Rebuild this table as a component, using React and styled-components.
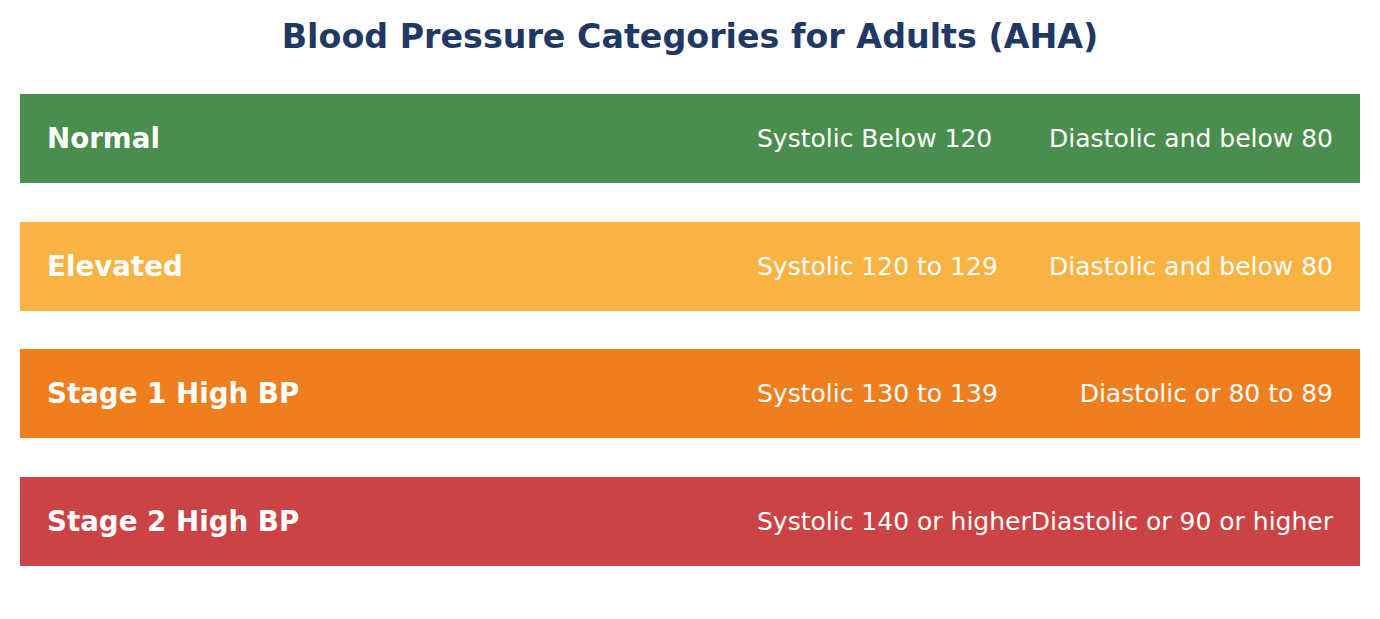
import React from 'react'
import styled, { createGlobalStyle } from 'styled-components'

const GlobalStyle = createGlobalStyle`
  html, body {
    margin: 0;
    padding: 0;
    background: #ffffff;
    font-family: "DejaVu Sans", "Liberation Sans", sans-serif;
  }
`

const Page = styled.div`
  padding: 0 20px;
`

const Title = styled.h1`
  margin: 0;
  padding-top: 17px;
  height: 94px;
  box-sizing: border-box;
  text-align: center;
  font-size: 33.3px;
  font-weight: bold;
  color: #1f3864;
`

const List = styled.div`
  display: flex;
  flex-direction: column;
  gap: 38.7px;
`

const Row = styled.div`
  display: flex;
  align-items: center;
  height: 89px;
  padding: 0 27px;
  background: ${p => p.color};
  color: #ffffff;
`

const Label = styled.div`
  flex: 1;
  font-size: 27.7px;
  font-weight: bold;
`

const Values = styled.div`
  display: flex;
  justify-content: space-between;
  width: 576px;
  font-size: 25px;
  white-space: nowrap;
`

const categories = [
  { name: 'Normal', color: '#4a8e4d', sys: 'Systolic Below 120', dia: 'Diastolic and below 80' },
  { name: 'Elevated', color: '#f9b342', sys: 'Systolic 120 to 129', dia: 'Diastolic and below 80' },
  { name: 'Stage 1 High BP', color: '#ef7e1f', sys: 'Systolic 130 to 139', dia: 'Diastolic or 80 to 89' },
  { name: 'Stage 2 High BP', color: '#cc4346', sys: 'Systolic 140 or higher', dia: 'Diastolic or 90 or higher' },
]

export default function App() {
  return (
    <Page>
      <GlobalStyle />
      <Title>Blood Pressure Categories for Adults (AHA)</Title>
      <List>
        {categories.map(c => (
          <Row key={c.name} color={c.color}>
            <Label>{c.name}</Label>
            <Values>
              <span>{c.sys}</span>
              <span>{c.dia}</span>
            </Values>
          </Row>
        ))}
      </List>
    </Page>
  )
}
